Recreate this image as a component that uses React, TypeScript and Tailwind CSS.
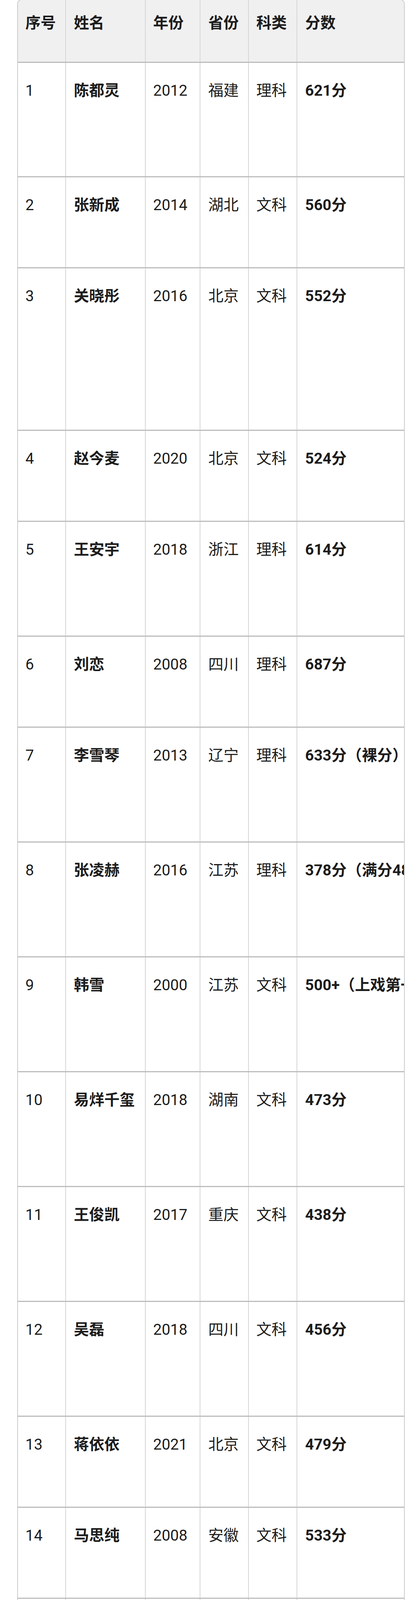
const ROWS = [
  { no: 1, name: "陈都灵", year: 2012, prov: "福建", kind: "理科", score: "621分", size: 1 },
  { no: 2, name: "张新成", year: 2014, prov: "湖北", kind: "文科", score: "560分", size: 0 },
  { no: 3, name: "关晓彤", year: 2016, prov: "北京", kind: "文科", score: "552分", size: 3 },
  { no: 4, name: "赵今麦", year: 2020, prov: "北京", kind: "文科", score: "524分", size: 0 },
  { no: 5, name: "王安宇", year: 2018, prov: "浙江", kind: "理科", score: "614分", size: 1 },
  { no: 6, name: "刘恋", year: 2008, prov: "四川", kind: "理科", score: "687分", size: 0 },
  { no: 7, name: "李雪琴", year: 2013, prov: "辽宁", kind: "理科", score: "633分（裸分）", size: 1 },
  { no: 8, name: "张凌赫", year: 2016, prov: "江苏", kind: "理科", score: "378分（满分480）", size: 1 },
  { no: 9, name: "韩雪", year: 2000, prov: "江苏", kind: "文科", score: "500+（上戏第一）", size: 1 },
  { no: 10, name: "易烊千玺", year: 2018, prov: "湖南", kind: "文科", score: "473分", size: 1 },
  { no: 11, name: "王俊凯", year: 2017, prov: "重庆", kind: "文科", score: "438分", size: 1 },
  { no: 12, name: "吴磊", year: 2018, prov: "四川", kind: "文科", score: "456分", size: 1 },
  { no: 13, name: "蒋依依", year: 2021, prov: "北京", kind: "文科", score: "479分", size: 0 },
  { no: 14, name: "马思纯", year: 2008, prov: "安徽", kind: "文科", score: "533分", size: 0 },
  { no: 15, name: "宋祖儿", year: 2018, prov: "天津", kind: "文科", score: "454分", size: 1 },
  { no: 16, name: "张雪迎", year: 2016, prov: "北京", kind: "文科", score: "415分", size: 0 },
  { no: 17, name: "张子枫", year: 2020, prov: "河南", kind: "文科", score: "391分", size: 1 },
  { no: 18, name: "李现", year: 2010, prov: "湖北", kind: "理科", score: "620分", size: 0 },
  { no: 19, name: "邓伦", year: 2011, prov: "河北", kind: "理科", score: "408分", size: 0 },
  { no: 20, name: "周冬雨", year: 2011, prov: "河北", kind: "文科", score: "286分", size: 0 },
  { no: 21, name: "张一山", year: 2010, prov: "北京", kind: "文科", score: "365分", size: 0 },
  { no: 22, name: "杨紫", year: 2010, prov: "北京", kind: "文科", score: "≈400分", size: 0 },
  { no: 23, name: "刘昊然", year: 2015, prov: "河南", kind: "文科", score: "454分", size: 0 },
  { no: 24, name: "李兰迪", year: 2018, prov: "北京", kind: "文科", score: "466分", size: 1 },
  { no: 25, name: "杨幂", year: 2005, prov: "北京", kind: "文科", score: "583分", size: 0 },
  { no: 26, name: "尚雯婕", year: 2001, prov: "上海", kind: "理科", score: "631分", size: 0 },
  { no: 27, name: "吴倩", year: 2010, prov: "湖北", kind: "理科", score: "621分", size: 0 },
  { no: 28, name: "江疏影", year: 2004, prov: "上海", kind: "文科", score: "612分", size: 0 },
  { no: 29, name: "王鹤润", year: 2013, prov: "山西", kind: "文科", score: "603分", size: 0 },
];

// row height grows with the wrapped (off-screen) columns
const ROW_H: Record<number, string> = {
  0: "h-[232.9px]",
  1: "h-[293.95px]",
  3: "h-[416.05px]",
};

const COLS = [
  "w-[121px] shrink-0 pl-[19px] pr-[20px]",
  "w-[204px] shrink-0 px-[20px] border-l-2 border-[#d6d6d6]",
  "w-[140px] shrink-0 px-[19px] border-l-2 border-[#d6d6d6]",
  "w-[124px] shrink-0 px-[20px] border-l-2 border-[#d6d6d6]",
  "w-[124px] shrink-0 px-[19px] border-l-2 border-[#d6d6d6]",
  "min-w-0 flex-1 overflow-hidden pl-[20px] border-l-2 border-[#d6d6d6]",
];

function Cell({ col, bold, pad, children }: { col: number; bold?: boolean; pad: string; children: React.ReactNode }) {
  return (
    <div className={`whitespace-nowrap ${COLS[col]} ${pad} ${bold ? "font-bold" : "font-normal"}`}>
      {children}
    </div>
  );
}

export default function App() {
  return (
    <div className="min-h-screen bg-white font-[Roboto,'Noto_Sans_CJK_SC',sans-serif] text-[39px] leading-[61px] text-[#1c1c1c]">
      <div className="-mt-[2px] ml-[44px] w-[992px] overflow-hidden rounded-t-[12px] border-2 border-[#cccccc]">
        <div className="flex h-[160.5px] border-b-[3px] border-[#bdbdbd] bg-[#f0f0f0]">
          {["序号", "姓名", "年份", "省份", "科类", "分数"].map((h, i) => (
            <Cell key={h} col={i} bold pad="pt-[29px]">
              {h}
            </Cell>
          ))}
        </div>

        {ROWS.map((r) => (
          <div key={r.no} className={`flex border-b-[3px] border-[#bdbdbd] ${ROW_H[r.size]}`}>
            <Cell col={0} pad="pt-[41px]">{r.no}</Cell>
            <Cell col={1} bold pad="pt-[41px]">{r.name}</Cell>
            <Cell col={2} pad="pt-[41px]">{r.year}</Cell>
            <Cell col={3} pad="pt-[41px]">{r.prov}</Cell>
            <Cell col={4} pad="pt-[41px]">{r.kind}</Cell>
            <Cell col={5} bold pad="pt-[41px]">{r.score}</Cell>
          </div>
        ))}
      </div>
    </div>
  );
}
